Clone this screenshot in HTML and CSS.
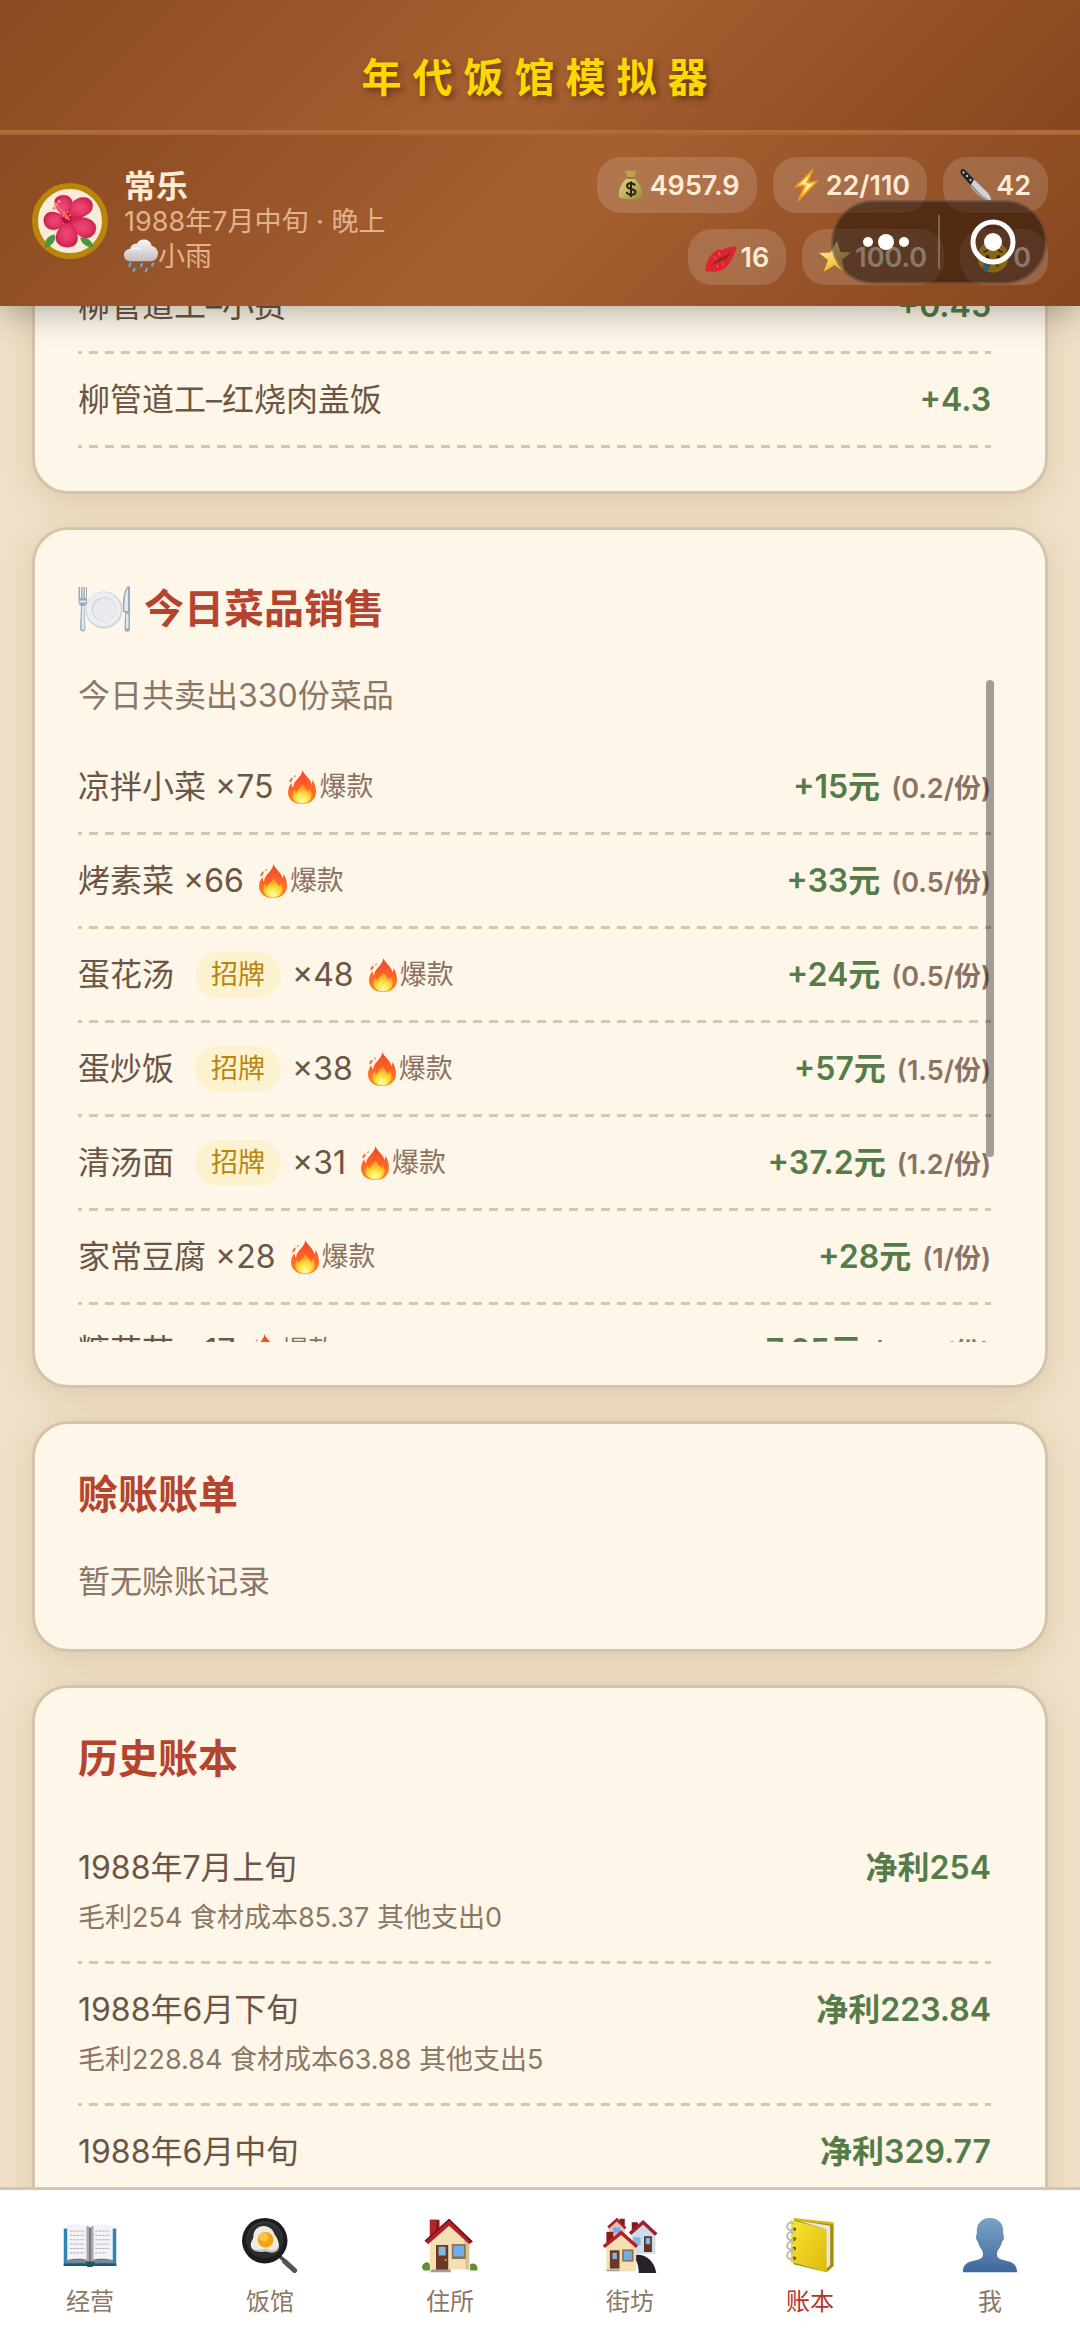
FILE: index.html
```html
<!DOCTYPE html>
<html lang="zh-CN">
<head>
  <meta charset="UTF-8">
  <meta name="viewport" content="width=device-width, initial-scale=1.0">
  <title>年代饭馆模拟器</title>
  <link rel="stylesheet" href="styles.css">
</head>
<body>
  <!-- 公用图标 -->
  <svg class="defs" aria-hidden="true">
    <defs>
      <linearGradient id="g-fire" x1="0" y1="0" x2="0" y2="1">
        <stop offset="0" stop-color="#f0452a"/><stop offset=".6" stop-color="#ff6a24"/><stop offset="1" stop-color="#ff8a1c"/>
      </linearGradient>
      <radialGradient id="g-core" cx=".5" cy=".85" r=".7">
        <stop offset="0" stop-color="#fffbb0"/><stop offset=".5" stop-color="#ffe23c"/><stop offset="1" stop-color="#ff9d2a"/>
      </radialGradient>
      <radialGradient id="g-petal">
        <stop offset="0" stop-color="#ef4a7a"/><stop offset=".6" stop-color="#e23765"/><stop offset="1" stop-color="#cf2150"/>
      </radialGradient>
      <linearGradient id="g-bust" x1="0" y1="0" x2="0" y2="1">
        <stop offset="0" stop-color="#78a3c8"/><stop offset="1" stop-color="#41689c"/>
      </linearGradient>
      <linearGradient id="g-book" x1="0" y1="0" x2="1" y2="1">
        <stop offset="0" stop-color="#f6e532"/><stop offset="1" stop-color="#dfb90f"/>
      </linearGradient>
      <linearGradient id="g-cloud" x1="0" y1="0" x2="0" y2="1">
        <stop offset="0" stop-color="#fbf9f8"/><stop offset="1" stop-color="#c3bcbd"/>
      </linearGradient>
      <linearGradient id="g-star" x1="0" y1="0" x2="0" y2="1">
        <stop offset="0" stop-color="#fff6c0"/><stop offset="1" stop-color="#f4b51c"/>
      </linearGradient>
      <linearGradient id="g-bag" x1="0" y1="0" x2="1" y2="1">
        <stop offset="0" stop-color="#e6da8c"/><stop offset="1" stop-color="#9a8a32"/>
      </linearGradient>
      <symbol id="fire" viewBox="0 0 56 68">
        <path fill="url(#g-fire)" d="M29 0c1 8 15 16 18 28 2-3 2-6 1-9 6 8 8 17 8 25 0 15-12 24-28 24S0 59 0 45c0-8 3-14 7-19 0 4 1 7 3 9C11 20 27 16 29 0z"/>
        <path fill="#ff5a3c" d="M9 15c-4 2-7 5-6 10 4-2 7-5 6-10zM15 10c-2 1-3 3-2 5 2-1 3-3 2-5z"/>
        <path fill="url(#g-core)" d="M29 29c3 6 9 9 11 15 2-2 2-5 2-7 5 5 6 11 5 16-2 9-10 14-19 14S10 61 9 53c-1-5 1-11 5-15 0 4 1 6 3 8 1-8 9-10 12-17z"/>
      </symbol>
      <symbol id="house" viewBox="0 0 64 64">
        <path fill="#8f1a1c" d="M9 3h11v16l-11 9z"/><path fill="#b3272a" d="M9 3h7v19l-7 6z"/>
        <path fill="#f4e0b2" d="M9 27 31 8l23 19v33H9z"/>
        <path fill="#dcc290" d="M48 24l6 4v32h-4z"/>
        <path fill="#b3202b" d="M31 2 3 27l4 4L31 10l23 21 4-3z"/>
        <path fill="#6c1419" d="M31 2v2L4 28l-1-1zM31 2l27 26-2 1L31 4z"/>
        <path fill="#6b3a25" d="M16 32h14v29H16z"/><path fill="#82b7e6" d="M19 34h8v10h-8z"/><circle cx="27" cy="49" r="1" fill="#f2cf60"/>
        <path fill="#8a7458" d="M34 31h16v17H34z"/><path fill="#6faee6" d="M36 33h12v12H36z"/>
        <path fill="#a59b95" d="M11 60h22v3H9z"/>
        <path fill="#5d9133" d="M0 58c0-6 8-9 9-3v6H2zM55 54c5-3 10 2 8 7h-8z"/>
      </symbol>
    </defs>
  </svg>

  <div class="app">
    <header class="header">
      <div class="title-bar"><h1 class="title">年代饭馆模拟器</h1></div>
      <div class="status-bar">
        <div class="player">
          <div class="avatar">
            <svg viewBox="0 0 64 64" aria-hidden="true">
              <path fill="#4b9640" d="M2 64c0-9 3-15 12-16 2 8-4 14-12 16zM60 63c-9 0-14-4-16-11 8-2 14 3 16 11z"/>
              <g fill="url(#g-petal)" stroke="#b8164a" stroke-opacity=".5">
                <path d="M26 28C14 18 10 7 18 3c8-4 18 0 17 10 0 6-4 11-9 15z"/>
                <path d="M28 28C30 12 38 4 48 4c10 0 12 8 10 14-3 8-18 13-30 10z"/>
                <path d="M26 28C14 18 2 20 1 30c-1 9 8 14 14 12 6-1 10-7 11-14z"/>
                <path d="M30 30c10-4 26-4 32 6 3 9-4 17-12 16-9-1-17-11-20-22z"/>
                <path d="M28 32c-8 6-15 16-12 24 3 7 14 9 21 5 8-6 3-22-9-29z"/>
              </g>
              <circle cx="28" cy="29" r="6" fill="#b80f3c"/>
              <path stroke="#f3606e" stroke-width="4" stroke-linecap="round" d="m29 28-13-15"/>
              <g fill="#ffb32b"><circle cx="25" cy="22" r="1"/><circle cx="29" cy="21" r="1"/><circle cx="32" cy="25" r="1"/><circle cx="27" cy="28" r="1"/><circle cx="31" cy="30" r="1"/><circle cx="24" cy="26" r="1"/></g>
              <g fill="#ff8c86"><circle cx="15" cy="12" r="2"/><circle cx="19" cy="9" r="2"/><circle cx="13" cy="17" r="2"/></g>
            </svg>
          </div>
          <div class="player-info">
            <div class="player-name">常乐</div>
            <div class="player-line">1988年7月中旬 · 晚上</div>
            <div class="player-line">
              <svg class="weather-icon" viewBox="0 0 64 64" aria-hidden="true">
                <path fill="url(#g-cloud)" d="M14 42C4 42 0 36 0 30s5-11 11-11C13 10 20 8 24 9 28 2 34 0 39 1c8 1 12 6 13 12 8 1 12 8 12 14 0 9-6 15-15 15z"/>
                <path fill="#fff" d="M14 22c4-9 18-8 20 0-6-3-14-4-20 0z" opacity=".7"/>
                <g stroke="#56b4e0" stroke-width="4" stroke-linecap="round"><path d="m12 46-2 5M34 47l-2 4M55 46l-2 4M20 56l-2 5M43 56l-2 5"/></g>
              </svg>小雨
            </div>
          </div>
        </div>
        <div class="stats">
          <div class="stat">
            <svg class="stat-icon" viewBox="0 0 64 64" aria-hidden="true">
              <path fill="#b7a64c" d="M22 2c5 4 8 0 12 2s8-2 11-1l-6 15H27z"/>
              <path fill="url(#g-bag)" d="M27 18h12c12 9 19 24 17 38-1 6-44 6-46 0-2-14 5-29 17-38z"/>
              <path stroke="#7d6c24" stroke-width="3" d="M26 18h14"/>
              <path fill="none" stroke="#29230f" stroke-width="4" d="M42 33c-3-6-16-6-16 1 0 8 17 4 17 12 0 7-15 8-18 0M34 25v31"/>
            </svg>4957.9
          </div>
          <div class="stat">
            <svg class="stat-icon" viewBox="0 0 64 64" aria-hidden="true">
              <path fill="#f9c531" stroke="#ef9420" stroke-width="3" stroke-linejoin="round" d="M46 1 10 36l19-3-12 30 38-39-20 3z"/>
              <path fill="#fff6b0" d="M39 12 19 31l17-3-9 21 19-20-18 3z"/>
            </svg>22/110
          </div>
          <div class="stat">
            <svg class="stat-icon" viewBox="0 0 64 64" aria-hidden="true">
              <path fill="#23272b" d="M3 1c3-2 6 0 9 3l19 20-9 9L4 13C0 9 0 3 3 1z"/>
              <path fill="#cfd3d7" d="m28 21 26 25c6 6 8 12 8 18-10-3-24-15-36-30l-4-3z"/>
              <path fill="#9ba1a8" d="M22 31c12 16 24 27 40 33-16-1-34-15-42-31z"/>
              <g fill="#f1f1f1"><circle cx="7" cy="7" r="2"/><circle cx="14" cy="14" r="2"/><circle cx="21" cy="22" r="2"/></g>
            </svg>42
          </div>
          <div class="stat">
            <svg class="stat-icon" viewBox="0 0 64 64" aria-hidden="true">
              <path fill="#dd2430" d="M0 60c2-14 8-32 22-41 6-4 10 0 13-1 6-4 20-8 29-6-4 12-10 26-19 37-12 14-26 14-45 11z"/>
              <path fill="#8c2a20" d="M11 50c7-9 13-10 18-16 5-2 12-2 22-12-4 11-10 15-17 17-7 5-13 4-23 11z"/>
              <path stroke="#f4737a" stroke-width="2" d="m17 31 5 5M28 23l2 6M26 54l-2-6M37 48l-3-5"/>
            </svg>16
          </div>
          <div class="stat">
            <svg class="stat-icon" viewBox="0 0 64 64" aria-hidden="true">
              <path fill="url(#g-star)" d="m36 0 7 22 21 1-18 14 5 25-20-14-22 14 9-24L0 24l23-1z"/>
            </svg>100.0
          </div>
          <div class="stat">
            <svg class="stat-icon" viewBox="0 0 64 64" aria-hidden="true">
              <circle cx="32" cy="32" r="31" fill="#f7c531"/>
              <g fill="none" stroke="#6a3e10" stroke-width="3" stroke-linecap="round"><path d="M22 50c5-8 15-8 20 0M14 22c4-1 7-3 9-6M50 22c-4-1-7-3-9-6"/></g>
              <circle cx="21" cy="32" r="4" fill="#5c3610"/><circle cx="43" cy="32" r="4" fill="#5c3610"/>
              <path fill="#45aee8" d="M18 40c6 8 8 20 0 22-9-1-8-14 0-22z"/>
            </svg>0
          </div>
        </div>
      </div>
      <!-- 小程序胶囊按钮 -->
      <div class="capsule">
        <button class="capsule-btn" type="button" aria-label="更多">
          <svg class="dots" viewBox="0 0 46 18"><circle cx="5" cy="9" r="5" fill="#fff"/><circle cx="23" cy="9" r="8" fill="#fff"/><circle cx="41" cy="9" r="5" fill="#fff"/></svg>
        </button>
        <button class="capsule-btn" type="button" aria-label="关闭">
          <svg class="target" viewBox="0 0 46 46"><circle cx="23" cy="23" r="20" fill="none" stroke="#fff" stroke-width="5"/><circle cx="23" cy="23" r="9" fill="#fff"/></svg>
        </button>
      </div>
    </header>

    <main class="content">
      <section class="card card-income">
        <ul class="list">
          <li class="row"><span>柳管道工–小费</span><span class="amount">+0.45</span></li>
          <li class="row"><span>柳管道工–红烧肉盖饭</span><span class="amount">+4.3</span></li>
        </ul>
      </section>

      <section class="card">
        <h2 class="card-title card-title-icon">
          <svg class="plate" viewBox="0 0 104 92" aria-hidden="true">
            <circle cx="52" cy="48" r="36" fill="#dfe2e7" stroke="#c7cbd3" stroke-width="2"/>
            <circle cx="51" cy="46" r="34" fill="#eceef1"/>
            <circle cx="52" cy="47" r="25" fill="#d3d7de"/><circle cx="53" cy="48" r="23" fill="#e8eaee"/>
            <path fill="#9aabbd" d="M1 2h3v22h2V2h3v22h2V2h3v22h2V2h2v30c0 6-5 7-5 9l2 44c0 8-11 8-11 0l2-44c0-2-5-3-5-9z"/>
            <path fill="#dfe8f1" d="M8 40h4l1 47H7zM3 29h13v4H3z"/>
            <path fill="#9aabbd" d="M101 0c2 0 3 2 3 5v82c0 6-11 6-11 0l1-35h-4c-2-24 2-47 11-52z"/>
            <path fill="#dfe8f1" d="M100 4v46h-7c-1-20 1-38 7-46zM96 55h5v30h-5z"/>
          </svg>今日菜品销售
        </h2>
        <div class="sales">
          <div class="sales-list">
            <p class="sales-total">今日共卖出330份菜品</p>
            <ul class="list">
              <li class="row">
                <span class="dish">凉拌小菜 ×75<span class="hot"><svg class="fire"><use href="#fire"/></svg>爆款</span></span>
                <span class="amount">+15元<small class="unit">(0.2/份)</small></span>
              </li>
              <li class="row">
                <span class="dish">烤素菜 ×66<span class="hot"><svg class="fire"><use href="#fire"/></svg>爆款</span></span>
                <span class="amount">+33元<small class="unit">(0.5/份)</small></span>
              </li>
              <li class="row">
                <span class="dish">蛋花汤<span class="tag">招牌</span>×48<span class="hot"><svg class="fire"><use href="#fire"/></svg>爆款</span></span>
                <span class="amount">+24元<small class="unit">(0.5/份)</small></span>
              </li>
              <li class="row">
                <span class="dish">蛋炒饭<span class="tag">招牌</span>×38<span class="hot"><svg class="fire"><use href="#fire"/></svg>爆款</span></span>
                <span class="amount">+57元<small class="unit">(1.5/份)</small></span>
              </li>
              <li class="row">
                <span class="dish">清汤面<span class="tag">招牌</span>×31<span class="hot"><svg class="fire"><use href="#fire"/></svg>爆款</span></span>
                <span class="amount">+37.2元<small class="unit">(1.2/份)</small></span>
              </li>
              <li class="row">
                <span class="dish">家常豆腐 ×28<span class="hot"><svg class="fire"><use href="#fire"/></svg>爆款</span></span>
                <span class="amount">+28元<small class="unit">(1/份)</small></span>
              </li>
              <li class="row">
                <span class="dish">糖芋苗 ×17<span class="hot"><svg class="fire"><use href="#fire"/></svg>爆款</span></span>
                <span class="amount">+7.65元<small class="unit">(0.45/份)</small></span>
              </li>
            </ul>
          </div>
          <div class="scroll-thumb"></div>
        </div>
      </section>

      <section class="card">
        <h2 class="card-title">赊账账单</h2>
        <p class="empty">暂无赊账记录</p>
      </section>

      <section class="card">
        <h2 class="card-title">历史账本</h2>
        <ul class="list">
          <li class="record">
            <div class="record-main"><span>1988年7月上旬</span><span class="amount">净利254</span></div>
            <p class="record-detail">毛利254 食材成本85.37 其他支出0</p>
          </li>
          <li class="record">
            <div class="record-main"><span>1988年6月下旬</span><span class="amount">净利223.84</span></div>
            <p class="record-detail">毛利228.84 食材成本63.88 其他支出5</p>
          </li>
          <li class="record">
            <div class="record-main"><span>1988年6月中旬</span><span class="amount">净利329.77</span></div>
          </li>
        </ul>
      </section>
    </main>

    <nav class="tabbar">
      <a class="tab" href="#">
        <svg class="tab-icon" viewBox="0 0 64 64" aria-hidden="true">
          <path fill="#2f86b4" d="M2 13h60v43H2z"/><path fill="#1e5877" d="M2 53h60v3H2z"/><path fill="#8a8588" d="M5 49h54v3H5z"/>
          <path fill="#f5f3f8" d="M6 10c10-3 21-2 25 2v38c-5-3-16-3-25-1zM58 10c-10-3-21-2-25 2v38c5-3 16-3 25-1z"/>
          <path fill="#aaa4ac" d="M28 10c2 0 3 1 4 3 1-2 2-3 4-3v40h-8z"/><path fill="#776f76" d="M31 12h2v40h-2z"/>
          <path fill="#1f5a56" d="M27 51h10l-2 6h-6z"/>
          <g stroke="#a9a5b5" stroke-dasharray="3 1"><path d="M9 16h17M9 21h17M9 26h17M9 31h17M9 36h17M9 41h17M38 16h17M38 21h17M38 26h17M38 31h17M38 36h17M38 41h13"/></g>
        </svg>
        <span>经营</span>
      </a>
      <a class="tab" href="#">
        <svg class="tab-icon" viewBox="0 0 64 64" aria-hidden="true">
          <path stroke="#474747" stroke-width="4" d="m43 45 8 7"/><path stroke="#555" stroke-width="6" stroke-linecap="round" d="m49 51 11 10"/>
          <circle cx="26" cy="27" r="26" fill="#1c1c1c"/><circle cx="26" cy="26" r="21" fill="#3a3a3a"/><circle cx="26" cy="27" r="20" fill="#2c2c2c"/>
          <path fill="#eeebe3" d="M16 14c7-7 17-3 20 3 2 5 7 9 6 17-1 7-9 7-15 5-6 2-17 0-17-7 0-5 3-6 3-10 0-3 1-6 3-8z"/>
          <path fill="#c9c4b7" d="M10 33c3 6 12 5 17 3 6 4 12 2 15-3 0 8-8 9-15 6-8 2-16 0-17-6z"/>
          <circle cx="27" cy="26" r="9" fill="#f6a413"/><circle cx="25" cy="23" r="5" fill="#ffc440"/>
        </svg>
        <span>饭馆</span>
      </a>
      <a class="tab" href="#">
        <svg class="tab-icon"><use href="#house"/></svg>
        <span>住所</span>
      </a>
      <a class="tab" href="#">
        <svg class="tab-icon" viewBox="0 0 64 64" aria-hidden="true">
          <path fill="#7d1b1f" d="M20 2h6v8h-6zM34 6h7v9h-7z"/>
          <path fill="#e9bcb4" d="m8 12 9-9 9 9v10H8z"/><path fill="none" stroke="#a3202a" stroke-width="3" d="m7 12 10-9 10 10"/><path fill="#6faee6" d="M13 12h8v6h-8z"/>
          <path fill="#cfdbe8" d="m34 20 13-12 14 12v22H34z"/><path fill="none" stroke="#a3202a" stroke-width="4" d="M32 19 47 6l15 14"/>
          <path fill="#5f3423" d="M48 22h9v18h-9z"/><path fill="#82b7e6" d="M50 24h5v7h-5zM36 23h8v9h-8z"/>
          <path fill="#27222a" d="M34 44c14-4 26 5 28 20H42c0-10-3-16-8-20z"/>
          <path fill="#8f1a1c" d="M5 17h8v12H5z"/>
          <path fill="#f4e0b2" d="m5 34 17-15 17 15v28H5z"/><path fill="none" stroke="#b3202b" stroke-width="4" d="m2 34 20-16 18 16"/>
          <path fill="#6b3a25" d="M9 38h11v21H9z"/><path fill="#82b7e6" d="M12 41h5v7h-5z"/><path fill="#8a7458" d="M23 37h13v14H23z"/><path fill="#6faee6" d="M25 39h9v10h-9z"/>
          <path fill="#a59b95" d="M6 60h14v2H5z"/>
        </svg>
        <span>街坊</span>
      </a>
      <a class="tab tab-active" href="#">
        <svg class="tab-icon" viewBox="0 0 64 64" aria-hidden="true">
          <path fill="#a78d0c" d="M14 2 59 7v49l-8 7-38-9z"/><path fill="#e8e5e4" d="m18 4 37 6v45l-5 5V14z"/>
          <path fill="#d9bd12" d="m12 2 2-1 45 5v3l-4-1-37-4z"/>
          <path fill="url(#g-book)" d="m10 3 40 11c1 0 1 1 1 2v47L10 51z"/>
          <g fill="#4b430f"><circle cx="14" cy="14" r="2"/><circle cx="14" cy="25" r="2"/><circle cx="14" cy="36" r="2"/><circle cx="14" cy="47" r="2"/></g>
          <g fill="none" stroke="#b9b7b4" stroke-width="2"><path d="M14 14c-4 3-9 0-8-4s5-5 7-2M14 25c-4 3-9 0-8-4s5-5 7-2M14 36c-4 3-9 0-8-4s5-5 7-2M14 47c-4 3-9 0-8-4s5-5 7-2"/></g>
        </svg>
        <span>账本</span>
      </a>
      <a class="tab" href="#">
        <svg class="tab-icon" viewBox="0 0 64 64" aria-hidden="true">
          <path fill="url(#g-bust)" d="M32 1c10 0 16 7 15 17 0 2 1 3 1 5s-1 4-2 5c-2 8-6 9-6 15 0 10 23 2 23 20H1c0-18 23-10 23-20 0-6-4-7-6-15-1-1-2-3-2-5s1-3 1-5C16 8 22 1 32 1z"/>
        </svg>
        <span>我</span>
      </a>
    </nav>
  </div>
</body>
</html>
```
FILE: styles.css
```css
* {
  box-sizing: border-box;
}

body {
  margin: 0;
  font-family: Inter, "Noto Sans CJK SC", sans-serif;
  font-size: 32px;
  line-height: 41px;
  color: #6b5545;
  background: #efe1c8;
}

h1, h2, p, ul {
  margin: 0;
  padding: 0;
}

.defs {
  position: absolute;
  width: 0;
  height: 0;
}

.app {
  display: flex;
  flex-direction: column;
  height: 100vh;
}

/* 顶部 */
.header {
  position: relative;
  z-index: 2;
  color: #fdebd6;
  box-shadow: 0 6px 32px rgba(0, 0, 0, 0.3);
}

.title-bar {
  padding: 50px 0 24px;
  text-align: center;
  background: linear-gradient(135deg, #8b4a22, #a66030 50%, #87461f);
  border-bottom: 3px solid #af6d3a;
}

.title {
  font-size: 40px;
  line-height: 56px;
  font-weight: 700;
  letter-spacing: 11px;
  color: #ffd700;
  text-shadow: 3px 3px 6px rgba(0, 0, 0, 0.4);
}

.status-bar {
  display: flex;
  justify-content: space-between;
  align-items: center;
  padding: 22px 32px 21px;
  background: linear-gradient(135deg, #8b4a22, #a66030 50%, #87461f);
  border-top: 2px solid #a96636;
}

.player {
  display: flex;
  align-items: center;
  gap: 16px;
}

.avatar {
  display: flex;
  align-items: center;
  justify-content: center;
  width: 76px;
  height: 76px;
  border: 6px solid #b8860b;
  border-radius: 50%;
  background: #f8ecd9;
}

.avatar svg {
  flex-shrink: 0;
  width: 54px;
  height: 54px;
}

.player-name {
  font-weight: 700;
  line-height: 35px;
}

.player-line {
  display: flex;
  align-items: center;
  font-size: 27px;
  line-height: 35px;
  color: #e2b28e;
}

.weather-icon {
  width: 34px;
  height: 34px;
}

.stats {
  display: flex;
  flex-wrap: wrap;
  justify-content: flex-end;
  gap: 16px;
  width: 480px;
}

.stat {
  display: flex;
  align-items: center;
  gap: 4px;
  height: 56px;
  padding: 0 17px;
  border-radius: 24px;
  font-size: 27px;
  font-weight: 600;
  background: rgba(255, 255, 255, 0.15);
}

.stat-icon {
  width: 32px;
  height: 32px;
}

.capsule {
  position: absolute;
  right: 33px;
  bottom: 22px;
  display: flex;
  align-items: center;
  width: 216px;
  height: 84px;
  border: 2px solid rgba(255, 255, 255, 0.15);
  border-radius: 42px;
  background: rgba(20, 8, 2, 0.5);
}

.capsule-btn {
  flex: 1;
  display: flex;
  align-items: center;
  justify-content: center;
  height: 54px;
  padding: 0;
  border: 0;
  background: none;
}

.capsule-btn + .capsule-btn {
  border-left: 2px solid rgba(255, 255, 255, 0.25);
}

.dots {
  width: 46px;
  height: 18px;
}

.target {
  width: 46px;
  height: 46px;
}

/* 内容区 */
.content {
  flex: 1;
  min-height: 0;
  overflow: hidden;
  display: flex;
  flex-direction: column;
  gap: 33px;
  padding: 0 32px;
}

.card {
  flex-shrink: 0;
  padding: 43px 54px 43px 43px;
  border: 3px solid #d4c5a9;
  border-radius: 36px;
  background: #fef6e8;
  box-shadow: 0 6px 32px rgba(139, 90, 43, 0.18);
}

/* 列表已滚动到末尾两行 */
.card-income {
  margin-top: -92px;
}

.card-title {
  display: flex;
  align-items: center;
  gap: 14px;
  margin-bottom: 35px;
  font-size: 40px;
  line-height: 56px;
  font-weight: 700;
  color: #b5442e;
}

.card-title-icon {
  line-height: 72px;
}

.plate {
  width: 52px;
  height: 46px;
}

.list {
  list-style: none;
}

.row,
.record {
  padding: 25px 0 28px;
  background: linear-gradient(90deg, #d4c8a8 9px, transparent 9px) 11px 100% / 16px 3px repeat-x;
}

.row {
  display: flex;
  justify-content: space-between;
  align-items: center;
}

.amount {
  font-weight: 600;
  color: #557c48;
}

.unit {
  margin-left: 11px;
  font-size: 27px;
  line-height: 27px;
  color: #8b7262;
}

.dish,
.hot {
  display: flex;
  align-items: center;
}

.tag {
  margin: -3px 11px -3px 21px;
  padding: 0 16px;
  border-radius: 23px;
  font-size: 27px;
  line-height: 46px;
  color: #b8860b;
  background: #fdf2cf;
}

.hot {
  margin-left: 15px;
  gap: 3px;
  font-size: 27px;
  color: #8b7262;
}

.fire {
  width: 28px;
  height: 34px;
}

.sales {
  position: relative;
}

.sales-list {
  height: 662px;
  overflow: hidden;
}

.sales-total {
  margin-bottom: 29px;
  line-height: 32px;
  color: #8b7765;
}

.scroll-thumb {
  position: absolute;
  top: 0;
  right: -3px;
  width: 8px;
  height: 72%;
  border-radius: 4px;
  background: rgba(0, 0, 0, 0.36);
}

.empty {
  line-height: 48px;
  color: #8b7765;
}

.record-main {
  display: flex;
  justify-content: space-between;
}

.record-detail {
  margin-top: 12px;
  font-size: 27px;
  line-height: 36px;
  color: #8b7765;
}

/* 底部导航 */
.tabbar {
  position: relative;
  z-index: 2;
  display: flex;
  padding: 27px 0 30px;
  border-top: 3px solid #d4c5b0;
  background: #fff;
}

.tab {
  flex: 1;
  display: flex;
  flex-direction: column;
  align-items: center;
  gap: 13px;
  font-size: 24px;
  line-height: 32px;
  color: #8b7765;
  text-decoration: none;
}

.tab-icon {
  width: 56px;
  height: 56px;
}

.tab-active {
  color: #b5342a;
}
```
